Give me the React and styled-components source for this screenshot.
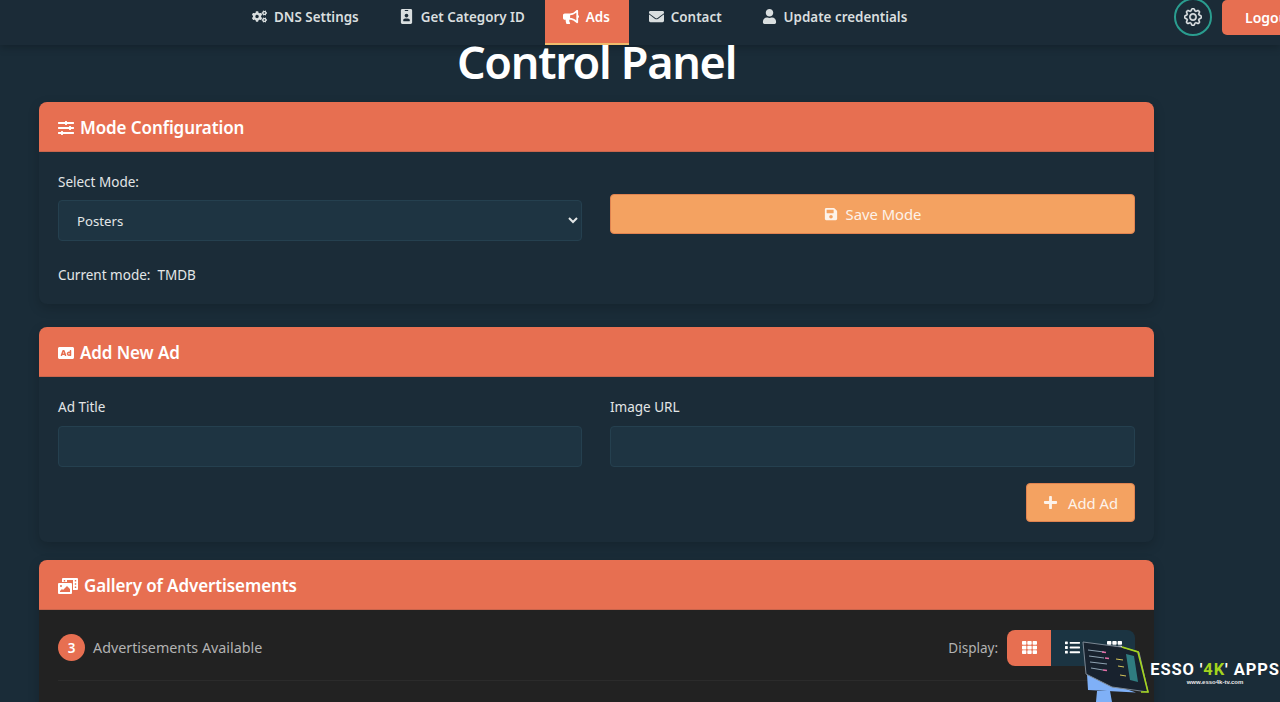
import React from "react";
import styled, { createGlobalStyle } from "styled-components";
import { FaCogs, FaIdBadge, FaBullhorn, FaEnvelope, FaUser, FaSlidersH, FaAd, FaPhotoVideo, FaSave, FaPlus, FaTh, FaList } from "react-icons/fa";
import { BsGear } from "react-icons/bs";

const GlobalStyle = createGlobalStyle`
	html, body {
		margin: 0;
		height: 702px;
		overflow: hidden;
		background: #1a2c38;
		color: #fff;
		font-family: "Noto Sans", "Open Sans", sans-serif;
	}
	* {
		box-sizing: border-box;
	}
`;

const Page = styled.div`
	position: relative;
	width: 1280px;
	height: 702px;
	overflow: hidden;
`;

const NavBar = styled.nav`
	display: flex;
	align-items: flex-start;
	height: 45px;
	padding-left: 232px;
	background: #1b2b37;
	box-shadow: 0 2px 8px rgba(0, 0, 0, 0.25);
`;

const NavItem = styled.a`
	display: flex;
	align-items: center;
	gap: 7px;
	height: 45px;
	padding: ${(p) => (p.$active ? "0 19px 10px 18px" : "0 20px 10px")};
	font-size: 13.4px;
	font-weight: 600;
	color: ${(p) => (p.$active ? "#fff" : "#d9dedf")};
	background: ${(p) => (p.$active ? "#e76f51" : "transparent")};
	border-bottom: 2px solid ${(p) => (p.$active ? "#f0bb6b" : "transparent")};
	svg {
		font-size: ${(p) => (p.$active ? 16 : 15)}px;
	}
`;

const NavRight = styled.div`
	display: flex;
	align-items: flex-start;
	gap: 10px;
	margin-left: auto;
	margin-right: -20px;
`;

const GearButton = styled.div`
	display: flex;
	align-items: center;
	justify-content: center;
	width: 38px;
	height: 38px;
	margin-top: -2px;
	border: 2px solid #2a9d8f;
	border-radius: 50%;
	color: #e4e8ea;
	font-size: 18px;
	svg {
		stroke: currentColor;
		stroke-width: 0.5px;
	}
`;

const LogoutButton = styled.button`
	width: 78px;
	height: 35px;
	padding: 0 0 0 23px;
	text-align: left;
	border: 0;
	border-radius: 5px;
	background: #e76f51;
	color: #fff;
	font: 600 14px "Noto Sans", sans-serif;
	white-space: nowrap;
`;

const Main = styled.main`
	padding: 0 126px 0 39px;
`;

const Title = styled.h1`
	margin: 0;
	padding-bottom: 23px;
	line-height: 34px;
	font-size: 45px;
	font-weight: 600;
	letter-spacing: -1.3px;
	text-align: center;
	color: #fff;
`;

const Card = styled.section`
	margin-bottom: ${(p) => p.$gap || 0}px;
	border-radius: 8px;
	background: ${(p) => (p.$dark ? "#222222" : "#1b2c38")};
	box-shadow: 0 4px 12px rgba(0, 0, 0, 0.18);
`;

const CardHeader = styled.header`
	display: flex;
	align-items: center;
	gap: 6px;
	height: 50px;
	padding: 2px 0 0 19px;
	background: #e76f51;
	border-radius: 8px 8px 0 0;
	border-bottom: 1px solid #c9654c;
	font-size: 17px;
	font-weight: 600;
	letter-spacing: -0.1px;
	svg {
		font-size: ${(p) => p.$iconSize || 16}px;
		flex: none;
	}
`;

const CardBody = styled.div`
	padding: ${(p) => p.$padding};
	height: ${(p) => p.$height}px;
`;

const FormRow = styled.div`
	display: grid;
	grid-template-columns: 524px 525px;
	gap: 28px;
	align-items: start;
`;

const Label = styled.label`
	display: block;
	margin-bottom: ${(p) => p.$gap || 9}px;
	line-height: 19px;
	font-size: 13.5px;
	color: #e3e6e7;
`;

const fieldStyle = `
	display: block;
	width: 100%;
	height: 41px;
	background: #1e3442;
	border: 1px solid #25404f;
	border-radius: 4px;
	color: #e3e6e7;
	font: 13.2px "Noto Sans", sans-serif;
	outline: none;
`;

const Select = styled.select`
	${fieldStyle}
	padding: 0 0 0 14px;
`;

const Input = styled.input`
	${fieldStyle}
`;

const PrimaryButton = styled.button`
	display: flex;
	align-items: center;
	justify-content: center;
	gap: ${(p) => p.$gap}px;
	width: ${(p) => p.$width || "100%"};
	height: ${(p) => p.$height}px;
	margin-top: ${(p) => p.$top || 0}px;
	background: #f4a261;
	border: 1px solid #e08350;
	border-radius: 4px;
	color: #fdf3ea;
	font: 14.8px "Noto Sans", sans-serif;
	svg {
		font-size: ${(p) => p.$iconSize}px;
		flex: none;
	}
`;

const CurrentMode = styled.div`
	margin-top: 24px;
	line-height: 20px;
	font-size: 13.5px;
	color: #e3e6e7;
	white-space: pre;
`;

const ActionRow = styled.div`
	display: flex;
	justify-content: flex-end;
`;

const GalleryBar = styled.div`
	display: flex;
	align-items: center;
	justify-content: space-between;
	height: 51px;
	border-bottom: 1px solid #2b2b2b;
	padding-bottom: 15px;
`;

const CountGroup = styled.div`
	display: flex;
	align-items: center;
	gap: 8px;
	font-size: 14.3px;
	color: #b3b3b3;
`;

const CountBadge = styled.span`
	display: flex;
	align-items: center;
	justify-content: center;
	width: 27px;
	height: 27px;
	border-radius: 50%;
	background: #e76f51;
	color: #fff;
	font-size: 13.5px;
	font-weight: 600;
`;

const DisplayGroup = styled.div`
	display: flex;
	align-items: center;
	gap: 9px;
	font-size: 13.5px;
	color: #b3b3b3;
`;

const Toggle = styled.div`
	display: flex;
	overflow: hidden;
	border-radius: 8px;
`;

const ToggleButton = styled.div`
	display: flex;
	align-items: center;
	justify-content: center;
	width: ${(p) => (p.$active ? 44 : 42)}px;
	height: 36px;
	background: ${(p) => (p.$active ? "#e76f51" : "#1b3442")};
	color: #fff;
	font-size: 15px;
`;

const Watermark = styled.div`
	position: absolute;
	right: 0;
	bottom: 0;
	display: flex;
	align-items: flex-end;
	height: 70px;
`;

const WatermarkText = styled.div`
	width: 130px;
	padding-bottom: 16px;
	text-align: center;
	white-space: nowrap;
`;

const WatermarkName = styled.div`
	font: 700 16.5px/19px Roboto, sans-serif;
	letter-spacing: 0.9px;
	color: #fff;
	span {
		color: #a4d41e;
	}
`;

const WatermarkUrl = styled.div`
	font: bold 6px/7px "Liberation Sans", sans-serif;
	color: #e8e8e8;
`;

const MonitorArt = () => (
  <svg width="74" height="70" viewBox="0 0 74 70">
    <path d="M21 59 L34 59 L36 70 L20 70 Z" fill="#7fb0f7" />
    <path d="M11 42 L12 58 L60 60.5 L36 52 Z" fill="#7fb0f7" />
    <path d="M7 10 L45 15 L63 20 L72 60 L36 55 L10 42 Z" fill="#18222e" stroke="#7b8793" strokeWidth="1" />
    <path d="M46 15 L62 20 L72 60 L65 60" fill="none" stroke="#a4d41e" strokeWidth="1.6" />
    <path d="M50 22 L58 24 L62 50 L54 48 Z" fill="#2f7c80" />
    <path d="M12 18 L28 20 M13 24 L28 26 M14 30 L31 32 M15 36 L27 38" stroke="#8fa3b2" strokeWidth="1" />
    <path d="M26 20 L30 20.5 M29 26 L33 26.5 M27 38 L31 38.5" stroke="#e56fa8" strokeWidth="1.4" />
    <path d="M40 27 L47 28 M42 34 L48 35 M44 43 L50 44" stroke="#d6c65a" strokeWidth="1" />
  </svg>
);

const navLinks = [
  { label: "DNS Settings", icon: <FaCogs /> },
  { label: "Get Category ID", icon: <FaIdBadge /> },
  { label: "Ads", icon: <FaBullhorn />, active: true },
  { label: "Contact", icon: <FaEnvelope /> },
  { label: "Update credentials", icon: <FaUser /> },
];

const App = () => {
  return (
    <Page>
      <GlobalStyle />
      <NavBar>
        {navLinks.map((link) => (
          <NavItem key={link.label} $active={link.active}>
            {link.icon}
            {link.label}
          </NavItem>
        ))}
        <NavRight>
          <GearButton>
            <BsGear />
          </GearButton>
          <LogoutButton>Logout</LogoutButton>
        </NavRight>
      </NavBar>
      <Main>
        <Title>Control Panel</Title>
        <Card $gap={23}>
          <CardHeader>
            <FaSlidersH />
            Mode Configuration
          </CardHeader>
          <CardBody $padding="21px 19px" $height={152}>
            <FormRow>
              <div>
                <Label $gap={8}>Select Mode:</Label>
                <Select defaultValue="posters">
                  <option value="posters">Posters</option>
                </Select>
              </div>
              <PrimaryButton $gap={8} $height={40} $top={21} $iconSize={14}>
                <FaSave />
                Save Mode
              </PrimaryButton>
            </FormRow>
            <CurrentMode>Current mode:  TMDB</CurrentMode>
          </CardBody>
        </Card>
        <Card $gap={18}>
          <CardHeader>
            <FaAd />
            Add New Ad
          </CardHeader>
          <CardBody $padding="21px 19px" $height={165}>
            <FormRow>
              <div>
                <Label>Ad Title</Label>
                <Input />
              </div>
              <div>
                <Label>Image URL</Label>
                <Input />
              </div>
            </FormRow>
            <ActionRow>
              <PrimaryButton $gap={10} $width="109px" $height={39} $top={16} $iconSize={15}>
                <FaPlus />
                Add Ad
              </PrimaryButton>
            </ActionRow>
          </CardBody>
        </Card>
        <Card $dark>
          <CardHeader $iconSize={20}>
            <FaPhotoVideo />
            Gallery of Advertisements
          </CardHeader>
          <CardBody $padding="20px 19px 0" $height={100}>
            <GalleryBar>
              <CountGroup>
                <CountBadge>3</CountBadge>
                Advertisements Available
              </CountGroup>
              <DisplayGroup>
                Display:
                <Toggle>
                  <ToggleButton $active>
                    <FaTh />
                  </ToggleButton>
                  <ToggleButton>
                    <FaList />
                  </ToggleButton>
                  <ToggleButton>
                    <FaTh />
                  </ToggleButton>
                </Toggle>
              </DisplayGroup>
            </GalleryBar>
          </CardBody>
        </Card>
      </Main>
      <Watermark>
        <MonitorArt />
        <WatermarkText>
          <WatermarkName>
            ESSO '<span>4K</span>' APPS
          </WatermarkName>
          <WatermarkUrl>www.esso4k-tv.com</WatermarkUrl>
        </WatermarkText>
      </Watermark>
    </Page>
  );
};

export default App;
